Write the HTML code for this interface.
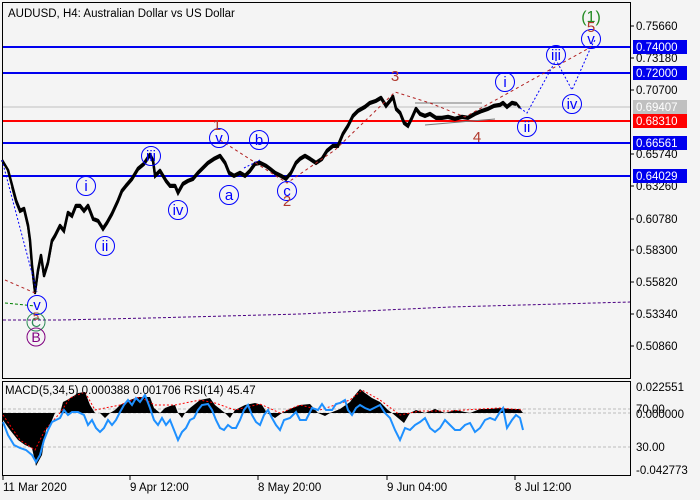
<!DOCTYPE html>
<html><head><meta charset="utf-8"><style>
body{margin:0;width:700px;height:500px;background:#f4f4f4;overflow:hidden;font-family:"Liberation Sans","DejaVu Sans",sans-serif}
svg{position:absolute;left:0;top:0}
</style></head><body>
<svg width="700" height="500" xmlns="http://www.w3.org/2000/svg" font-family="Liberation Sans, DejaVu Sans, sans-serif">
<rect x="0" y="0" width="700" height="500" fill="#f4f4f4"/>
<rect x="2.5" y="2.5" width="628" height="376" fill="none" stroke="#000" stroke-width="1"/>
<rect x="2.5" y="381.5" width="628" height="94" fill="none" stroke="#000" stroke-width="1"/>
<text x="8" y="17" font-size="11.5" fill="#000">AUDUSD, H4:  Australian Dollar vs US Dollar</text>
<line x1="3" y1="107" x2="630" y2="107" stroke="#c0c0c0" stroke-width="1"/>
<g stroke="#0000ee" stroke-width="2">
<line x1="3" y1="47" x2="630" y2="47"/><line x1="3" y1="73" x2="630" y2="73"/>
<line x1="3" y1="143" x2="630" y2="143"/><line x1="3" y1="176" x2="630" y2="176"/></g>
<line x1="3" y1="121" x2="630" y2="121" stroke="#ff0000" stroke-width="2"/>
<polyline points="3,320 60,320 150,318 300,314 450,307 630,302" fill="none" stroke="#4b0082" stroke-dasharray="3,2"/>
<polyline points="5,303 35,306" fill="none" stroke="#008000" stroke-dasharray="3,2"/>
<polyline fill="none" stroke="#000" stroke-width="2.5" stroke-linejoin="round" points="2,160 8,170 12,185 16,200 20,210 24,208 28,225 30,240 32,265 35,292 38,270 41,255 44,275 48,262 52,240 55,235 60,225 64,230 68,212 72,215 76,205 80,205 84,210 88,205 93,218 98,220 103,228 107,222 112,213 118,200 122,190 126,185 132,178 138,168 144,163 150,154 153,160 155,175 160,170 166,180 170,185 175,185 178,192 183,183 188,180 193,178 198,172 202,168 208,162 214,158 220,155 225,162 229,172 234,175 240,172 245,175 250,170 255,163 260,162 266,165 270,168 275,172 281,175 286,178 291,172 296,162 300,158 305,155 310,158 316,162 322,158 327,150 333,145 338,145 343,133 348,125 353,115 358,110 365,106 370,102 376,100 381,97 386,105 390,100 393,96 396,108 400,112 404,122 408,125 412,117 416,108 420,113 425,115 430,113 436,117 442,117 448,116 455,118 462,116 468,117 475,113 482,110 488,108 494,105 500,104 503,102 507,106 512,102 516,103 520,108"/>
<polyline fill="none" stroke="#000" stroke-width="2" transform="translate(0,2)" points="12,185 16,200 20,210 24,208 28,225 30,240 32,265 35,292 38,270 41,255 44,275 48,262 52,240 55,235 60,225 64,230 68,212 72,215 76,205 80,205 84,210 88,205 93,218 98,220 103,228 107,222 112,213 118,200 122,190 126,185 132,178 138,168 144,163 150,154 153,160 155,175 160,170 166,180 170,185 175,185 178,192 183,183 188,180 193,178 198,172 202,168 208,162 214,158 220,155 225,162 229,172 234,175 240,172 245,175 250,170 255,163 260,162 266,165 270,168 275,172 281,175 286,178 291,172 296,162 300,158 305,155 310,158 316,162 322,158 327,150 333,145 338,145 343,133 348,125 353,115 358,110 365,106 370,102 376,100 381,97 386,105 390,100 393,96 396,108 400,112 404,122 408,125 412,117 416,108 420,113 425,115 430,113 436,117 442,117 448,116 455,118 462,116 468,117 475,113 482,110 488,108 494,105 500,104 503,102 507,106 512,102 516,103"/>
<polyline points="415,103 482,103" stroke="#777" fill="none"/>
<polyline points="425,125 495,119" stroke="#777" fill="none"/>
<g fill="none" stroke="#0000ff" stroke-dasharray="2,2">
<polyline points="2,160 37,292"/>
<polyline points="520,108 527,113 556,60 572,90 591,47 595,40"/>
<polyline points="244,168 260,160"/>
</g>
<g fill="none" stroke="#b22222" stroke-dasharray="3,3">
<polyline points="5,280 35,293"/>
<polyline points="220,140 287,183 335,150 395,92 430,103 465,117 591,47"/>
</g>
<g fill="none" stroke="#0000ff" stroke-width="1">
<circle cx="86" cy="186" r="9.5"/><circle cx="105" cy="246" r="9.5"/><circle cx="151" cy="156" r="9.5"/><circle cx="178" cy="210" r="9.5"/><circle cx="219" cy="138" r="9.5"/><circle cx="229" cy="195" r="9.5"/><circle cx="259" cy="140" r="9.5"/><circle cx="287" cy="191" r="9.5"/><circle cx="37" cy="305" r="9.5"/>
<circle cx="505" cy="82" r="9.5"/><circle cx="527" cy="127" r="9.5"/><circle cx="556" cy="55" r="9.5"/><circle cx="572" cy="104" r="9.5"/><circle cx="591" cy="39" r="9.5"/>
</g>
<circle cx="36" cy="322" r="9" fill="none" stroke="#2e8b57"/>
<circle cx="36" cy="337" r="9" fill="none" stroke="#800080"/>
<g fill="#0000ff" font-size="15" text-anchor="middle">
<text x="86" y="191">i</text><text x="105" y="251">ii</text><text x="151" y="161">iii</text><text x="178" y="215">iv</text><text x="219" y="143">v</text><text x="229" y="200">a</text><text x="259" y="145">b</text><text x="287" y="196">c</text><text x="37" y="310">v</text>
<text x="505" y="87">i</text><text x="527" y="132">ii</text><text x="556" y="60">iii</text><text x="572" y="109">iv</text><text x="591" y="44">v</text>
</g>
<text x="36" y="327" font-size="14" fill="#2e8b57" text-anchor="middle">C</text>
<text x="36" y="342" font-size="14" fill="#800080" text-anchor="middle">B</text>
<g fill="#b03a2e" font-size="15" text-anchor="middle">
<text x="217" y="130">1</text><text x="287" y="206">2</text><text x="395" y="81">3</text><text x="477" y="142">4</text><text x="591" y="32">5</text><text x="36" y="320" font-size="11">5</text></g>
<text x="591" y="22" font-size="16" fill="#228b22" text-anchor="middle">(1)</text>
<g font-size="11.5" fill="#000">
<g stroke="#000"><line x1="630" y1="26" x2="634" y2="26"/><line x1="630" y1="58" x2="634" y2="58"/><line x1="630" y1="90" x2="634" y2="90"/><line x1="630" y1="154" x2="634" y2="154"/><line x1="630" y1="186" x2="634" y2="186"/><line x1="630" y1="219" x2="634" y2="219"/><line x1="630" y1="250" x2="634" y2="250"/><line x1="630" y1="282" x2="634" y2="282"/><line x1="630" y1="314" x2="634" y2="314"/><line x1="630" y1="346" x2="634" y2="346"/></g>
<text x="636" y="30">0.75660</text><text x="636" y="62">0.73180</text><text x="636" y="94">0.70700</text><text x="636" y="158">0.65740</text><text x="636" y="190">0.63260</text><text x="636" y="223">0.60780</text><text x="636" y="254">0.58300</text><text x="636" y="286">0.55820</text><text x="636" y="318">0.53340</text><text x="636" y="350">0.50860</text>
</g>
<g font-size="11.5" fill="#fff">
<rect x="633" y="40" width="54" height="14" fill="#0000ee"/><text x="636" y="51">0.74000</text>
<rect x="633" y="66" width="54" height="14" fill="#0000ee"/><text x="636" y="77">0.72000</text>
<rect x="633" y="100" width="54" height="14" fill="#c0c0c0"/><text x="636" y="111">0.69407</text>
<rect x="633" y="114" width="54" height="14" fill="#ff0000"/><text x="636" y="125">0.68310</text>
<rect x="633" y="136" width="54" height="14" fill="#0000ee"/><text x="636" y="147">0.66561</text>
<rect x="633" y="169" width="54" height="14" fill="#0000ee"/><text x="636" y="180">0.64029</text>
</g>
<line x1="3" y1="409" x2="630" y2="409" stroke="#bbb" stroke-dasharray="3,2"/>
<line x1="3" y1="413" x2="630" y2="413" stroke="#bbb" stroke-dasharray="3,2"/>
<line x1="3" y1="447" x2="630" y2="447" stroke="#bbb" stroke-dasharray="3,2"/>
<polygon fill="#000" points="3,413 3,420 10,430 18,440 25,445 32,448 36,466 42,455 46,430 50,425 55,413 60,413 63,402 67,400 72,397 78,393 85,392 90,405 95,413 100,413 105,418 110,413 115,410 120,405 130,400 138,397 150,397 154,408 160,413 165,408 170,406 175,405 178,413 182,418 185,413 190,408 200,400 210,398 215,405 225,413 230,418 235,410 245,405 255,403 262,405 267,413 275,418 282,413 290,409 300,405 310,404 318,413 325,416 330,413 340,409 350,402 355,395 360,389 365,393 372,398 380,402 388,410 392,413 398,418 404,423 410,413 416,410 425,413 435,409 445,413 455,410 470,413 480,409 490,409 500,408 510,409 520,409 523,413 3,413"/>
<polyline fill="none" stroke="#ff0000" stroke-dasharray="2,2" points="3,415 20,440 35,450 45,430 60,413 70,398 85,392 95,410 120,405 140,397 155,405 175,405 200,400 215,403 235,410 260,404 280,413 300,405 320,410 350,400 362,390 380,400 400,415 420,411 450,411 480,409 500,408 523,410"/>
<polyline fill="none" stroke="#1e90ff" stroke-width="2" points="3,422 8,435 14,445 20,448 26,450 32,455 36,462 40,455 44,440 48,430 52,422 56,420 60,418 64,410 68,415 72,412 78,412 84,415 88,425 92,420 96,428 100,432 104,428 108,420 112,425 116,420 120,412 124,405 128,400 132,405 136,398 140,402 145,395 150,408 154,420 158,425 162,418 166,425 170,420 174,430 178,440 182,432 186,428 190,420 194,418 198,410 202,405 208,404 212,410 216,420 220,428 224,430 228,425 232,428 236,428 240,420 244,410 248,405 252,415 256,422 260,425 264,415 268,410 272,418 276,425 280,430 284,420 290,418 296,412 300,420 306,420 312,408 318,410 322,404 326,410 332,410 336,404 340,403 345,400 348,410 352,415 356,408 360,405 365,408 370,410 380,405 385,413 390,418 395,430 400,440 405,428 410,430 415,425 420,422 425,418 430,428 435,432 440,428 445,420 450,425 455,430 460,430 465,425 470,423 475,432 480,428 485,420 490,418 495,420 500,412 503,408 507,428 512,420 516,415 520,418 523,430"/>
<text x="5" y="394" font-size="11.5" fill="#000">MACD(5,34,5) 0.000388 0.001706 RSI(14) 45.47</text>
<g font-size="11.5" fill="#000">
<text x="636" y="391">0.022551</text><text x="636" y="413">70.00</text><text x="636" y="418">0.000000</text><text x="636" y="451">30.00</text><text x="636" y="474">-0.042773</text>
<text x="3" y="491">11 Mar 2020</text><text x="130" y="491">9 Apr 12:00</text><text x="258" y="491">8 May 20:00</text><text x="387" y="491">9 Jun 04:00</text><text x="515" y="491">8 Jul 12:00</text>
</g>
<g stroke="#000"><line x1="3" y1="476" x2="3" y2="480"/><line x1="130" y1="476" x2="130" y2="480"/><line x1="258" y1="476" x2="258" y2="480"/><line x1="387" y1="476" x2="387" y2="480"/><line x1="515" y1="476" x2="515" y2="480"/></g>
</svg>
</body></html>
